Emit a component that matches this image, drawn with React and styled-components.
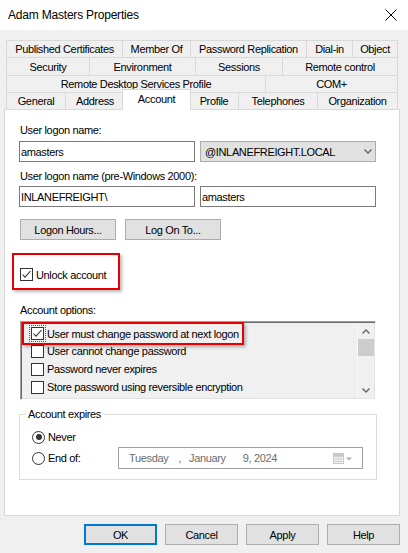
import React from 'react';
import styled, { createGlobalStyle } from 'styled-components';

const GlobalStyle = createGlobalStyle`
  html, body { margin: 0; padding: 0; background: #f0f0f0; }
  body {
    font-family: "Liberation Sans", Arial, sans-serif;
    font-size: 11px;
    letter-spacing: -0.35px;
    color: #000;
  }
  * { box-sizing: border-box; }
`;

const Window = styled.div`
  width: 408px;
  height: 553px;
  background: #f0f0f0;
  display: flex;
  flex-direction: column;
  overflow: hidden;
`;

const TitleBar = styled.div`
  height: 30px;
  background: #fff;
  display: flex;
  align-items: center;
  justify-content: space-between;
  padding: 0 11px 0 8px;
`;

const Title = styled.div`
  font-size: 12px;
  letter-spacing: -0.2px;
`;

const Body = styled.div`
  padding: 10px 8px 0 4px;
  display: flex;
  flex-direction: column;
`;

// tabs
const TabStrip = styled.div`
  margin: 0 2px;
  display: flex;
  flex-direction: column;
`;

const TabRow = styled.div`
  display: flex;
  height: ${p => p.$h}px;
`;

const Tab = styled.div`
  flex: ${p => (p.$w ? `0 0 ${p.$w}px` : '1 1 auto')};
  display: flex;
  align-items: center;
  justify-content: center;
  white-space: nowrap;
  background: #f0f0f0;
  border: 1px solid #d9d9d9;
  border-bottom: none;
  border-right: none;
  &:last-child { border-right: 1px solid #d9d9d9; }
`;

const ActiveTab = styled(Tab)`
  flex: 0 0 ${p => p.$w + 4}px;
  height: calc(100% + 4px);
  margin: -3px -2px -1px;
  background: #fff;
  border-right: 1px solid #d9d9d9;
  position: relative;
  z-index: 2;
  padding-bottom: 2px;
`;

// page
const Panel = styled.div`
  height: 407px;
  background: #fff;
  border: 1px solid #d9d9d9;
  padding: 14px 0 0 14px;
  display: flex;
  flex-direction: column;
  align-items: flex-start;
`;

const Label = styled.div`
  line-height: 13px;
  margin: ${p => p.$mt || 0}px 0 0 1px;
`;

const FieldRow = styled.div`
  display: flex;
  gap: 5px;
  margin-top: ${p => p.$mt || 0}px;
`;

const TextBox = styled.div`
  width: 176px;
  height: 21px;
  border: 1px solid #7a7a7a;
  background: #fff;
  padding-left: 1px;
  display: flex;
  align-items: center;
`;

const Combo = styled(TextBox)`
  background: #e1e1e1;
  border-color: #adadad;
  padding: 0 3px 0 4px;
  justify-content: space-between;
`;

const ButtonRow = styled.div`
  display: flex;
  gap: ${p => p.$gap}px;
  margin: ${p => p.$mt}px 0 0 ${p => p.$ml || 0}px;
  justify-content: ${p => p.$end ? 'flex-end' : 'flex-start'};
  align-self: stretch;
`;

const Button = styled.div`
  width: ${p => p.$w}px;
  height: 21px;
  background: #e1e1e1;
  border: ${p => p.$default ? '2px solid #0078d7' : '1px solid #adadad'};
  display: flex;
  align-items: center;
  justify-content: center;
`;

const Highlight = styled.div`
  display: flex;
  align-items: center;
  gap: 3px;
  border: 2px solid #e60000;
  box-shadow: 2px 2px 3px rgba(0, 0, 0, 0.28);
`;

const UnlockBox = styled(Highlight)`
  width: 108px;
  height: 37px;
  margin: 13px 0 0 -7px;
  padding: 11px 6px 5px 6px;
`;

const ItemBox = styled(Highlight)`
  height: 23px;
  margin: -2px 0 -3px -9px;
  padding: 0 3px 0 7px;
`;

const Check = styled.span`
  width: 13px;
  height: 13px;
  flex: 0 0 13px;
  border: 1px solid #333;
  background: #fff;
  display: inline-flex;
  align-items: center;
  justify-content: center;
  outline: ${p => p.$focus ? '1px dotted #555' : 'none'};
  outline-offset: 1px;
`;

const ListBox = styled.div`
  width: 356px;
  height: 79px;
  margin: 4px 0 0 1px;
  display: flex;
  background: #f0f0f0;
  border: 1px solid;
  border-color: #a0a0a0 #fff #fff #a0a0a0;
  box-shadow: inset 1px 1px 0 #696969, inset -1px -1px 0 #e3e3e3;
`;

const Items = styled.div`
  flex: 1;
  padding: 2px 0 0 10px;
`;

const Item = styled.div`
  height: 18px;
  display: flex;
  align-items: center;
  gap: 3px;
`;

const ScrollBar = styled.div`
  width: 17px;
  margin: 1px 1px 1px 0;
  display: flex;
  flex-direction: column;
  border-left: 1px solid #f8f8f8;
`;

const ScrollArrow = styled.div`
  height: 16px;
  display: flex;
  align-items: center;
  justify-content: center;
  margin-top: ${p => p.$down ? 'auto' : '0'};
`;

const Thumb = styled.div`
  height: 17px;
  background: #cdcdcd;
`;

const Group = styled.fieldset`
  width: 358px;
  margin: 8px 0 0 0;
  padding: 0 13px 10px 12px;
  border: 1px solid #dcdcdc;
  min-width: 0;
`;

const Legend = styled.legend`
  padding: 0 2px;
  margin-left: -6px;
  line-height: 13px;
`;

const RadioRow = styled.div`
  height: ${p => p.$h}px;
  margin-top: ${p => p.$mt || 0}px;
  display: flex;
  align-items: center;
  gap: 3px;
`;

const Radio = styled.span`
  width: 13px;
  height: 13px;
  border: 1px solid #333;
  border-radius: 50%;
  background: #fff;
  display: inline-flex;
  align-items: center;
  justify-content: center;
  &::after {
    content: '';
    width: 6px;
    height: 6px;
    border-radius: 50%;
    background: ${p => p.$on ? '#333' : 'transparent'};
  }
`;

const DatePicker = styled.div`
  width: 245px;
  height: 22px;
  margin-left: auto;
  border: 1px solid #a0a0a0;
  padding: 0 6px 0 10px;
  display: flex;
  align-items: center;
  color: #6d6d6d;
`;

const DatePart = styled.span`
  margin-left: ${p => p.$ml || 0}px;
`;

const Footer = styled(ButtonRow)``;

const CheckMark = () => (
  <svg width="11" height="11" viewBox="0 0 11 11">
    <path d="M1.5 5.5 L4 8.2 L9.5 2" fill="none" stroke="#333" strokeWidth="1.1" />
  </svg>
);

const Chevron = ({ up, color = '#606060' }) => (
  <svg width="8" height="5" viewBox="0 0 8 5">
    <path d={up ? 'M0.5 4.5 L4 1 L7.5 4.5' : 'M0.5 0.5 L4 4 L7.5 0.5'} fill="none" stroke={color} strokeWidth="1.3" />
  </svg>
);

const tabRows = [
  { h: 17, tabs: [['Published Certificates', 116], ['Member Of', 68], ['Password Replication', 116], ['Dial-in', 46], ['Object']] },
  { h: 18, tabs: [['Security', 83], ['Environment', 106], ['Sessions', 87], ['Remote control']] },
  { h: 17, tabs: [['Remote Desktop Services Profile', 259], ['COM+']] },
  { h: 17, tabs: [['General', 59], ['Address', 59], ['Account', 65, true], ['Profile', 49], ['Telephones', 79], ['Organization']] },
];

const options = [
  'User must change password at next logon',
  'User cannot change password',
  'Password never expires',
  'Store password using reversible encryption',
];

export default function App() {
  return (
    <>
      <GlobalStyle />
      <Window>
        <TitleBar>
          <Title>Adam Masters Properties</Title>
          <svg width="12" height="12" viewBox="0 0 12 12">
            <path d="M0.5 0.5 L11.5 11.5 M11.5 0.5 L0.5 11.5" stroke="#000" strokeWidth="1" />
          </svg>
        </TitleBar>
        <Body>
          <TabStrip>
            {tabRows.map((row, i) => (
              <TabRow key={i} $h={row.h}>
                {row.tabs.map(([name, w, active]) =>
                  active
                    ? <ActiveTab key={name} $w={w}>{name}</ActiveTab>
                    : <Tab key={name} $w={w}>{name}</Tab>
                )}
              </TabRow>
            ))}
          </TabStrip>

          <Panel>
            <Label>User logon name:</Label>
            <FieldRow $mt={4}>
              <TextBox>amasters</TextBox>
              <Combo>
                <span>@INLANEFREIGHT.LOCAL</span>
                <Chevron />
              </Combo>
            </FieldRow>
            <Label $mt={8}>User logon name (pre-Windows 2000):</Label>
            <FieldRow $mt={3}>
              <TextBox>INLANEFREIGHT\</TextBox>
              <TextBox>amasters</TextBox>
            </FieldRow>
            <ButtonRow $gap={9} $mt={12} $ml={1}>
              <Button $w={96}>Logon Hours...</Button>
              <Button $w={96}>Log On To...</Button>
            </ButtonRow>

            <UnlockBox>
              <Check><CheckMark /></Check>
              <span>Unlock account</span>
            </UnlockBox>

            <Label $mt={14}>Account options:</Label>
            <ListBox>
              <Items>
                {options.map((o, i) => (
                  <Item key={o}>
                    {i === 0 ? (
                      <ItemBox>
                        <Check $focus><CheckMark /></Check>
                        <span>{o}</span>
                      </ItemBox>
                    ) : (
                      <>
                        <Check />
                        <span>{o}</span>
                      </>
                    )}
                  </Item>
                ))}
              </Items>
              <ScrollBar>
                <ScrollArrow><Chevron up /></ScrollArrow>
                <Thumb />
                <ScrollArrow $down><Chevron /></ScrollArrow>
              </ScrollBar>
            </ListBox>

            <Group>
              <Legend>Account expires</Legend>
              <RadioRow $h={20} $mt={6}>
                <Radio $on />
                <span>Never</span>
              </RadioRow>
              <RadioRow $h={22}>
                <Radio />
                <span>End of:</span>
                <DatePicker>
                  <DatePart>Tuesday</DatePart>
                  <DatePart $ml={10}>,</DatePart>
                  <DatePart $ml={8}>January</DatePart>
                  <DatePart $ml={17}>9, 2024</DatePart>
                  <DatePart $ml={56} style={{ display: 'flex' }}>
                    <svg width="20" height="11" viewBox="0 0 20 11">
                      <rect x="0.5" y="0.5" width="10" height="10" fill="#fff" stroke="#c8c8c8" />
                      <path d="M0.5 3.5 H10.5 M0.5 6 H10.5 M0.5 8.5 H10.5 M3 3.5 V10.5 M5.5 3.5 V10.5 M8 3.5 V10.5" stroke="#d0d0d0" strokeWidth="1" />
                      <rect x="0.5" y="0.5" width="10" height="2.5" fill="#c8c8c8" />
                      <path d="M13 4.5 L19 4.5 L16 7.5 Z" fill="#b0b0b0" />
                    </svg>
                  </DatePart>
                </DatePicker>
              </RadioRow>
            </Group>
          </Panel>

          <Footer $gap={8} $mt={8} $end>
            <Button $w={73} $default>OK</Button>
            <Button $w={73}>Cancel</Button>
            <Button $w={73}>Apply</Button>
            <Button $w={73}>Help</Button>
          </Footer>
        </Body>
      </Window>
    </>
  );
}
